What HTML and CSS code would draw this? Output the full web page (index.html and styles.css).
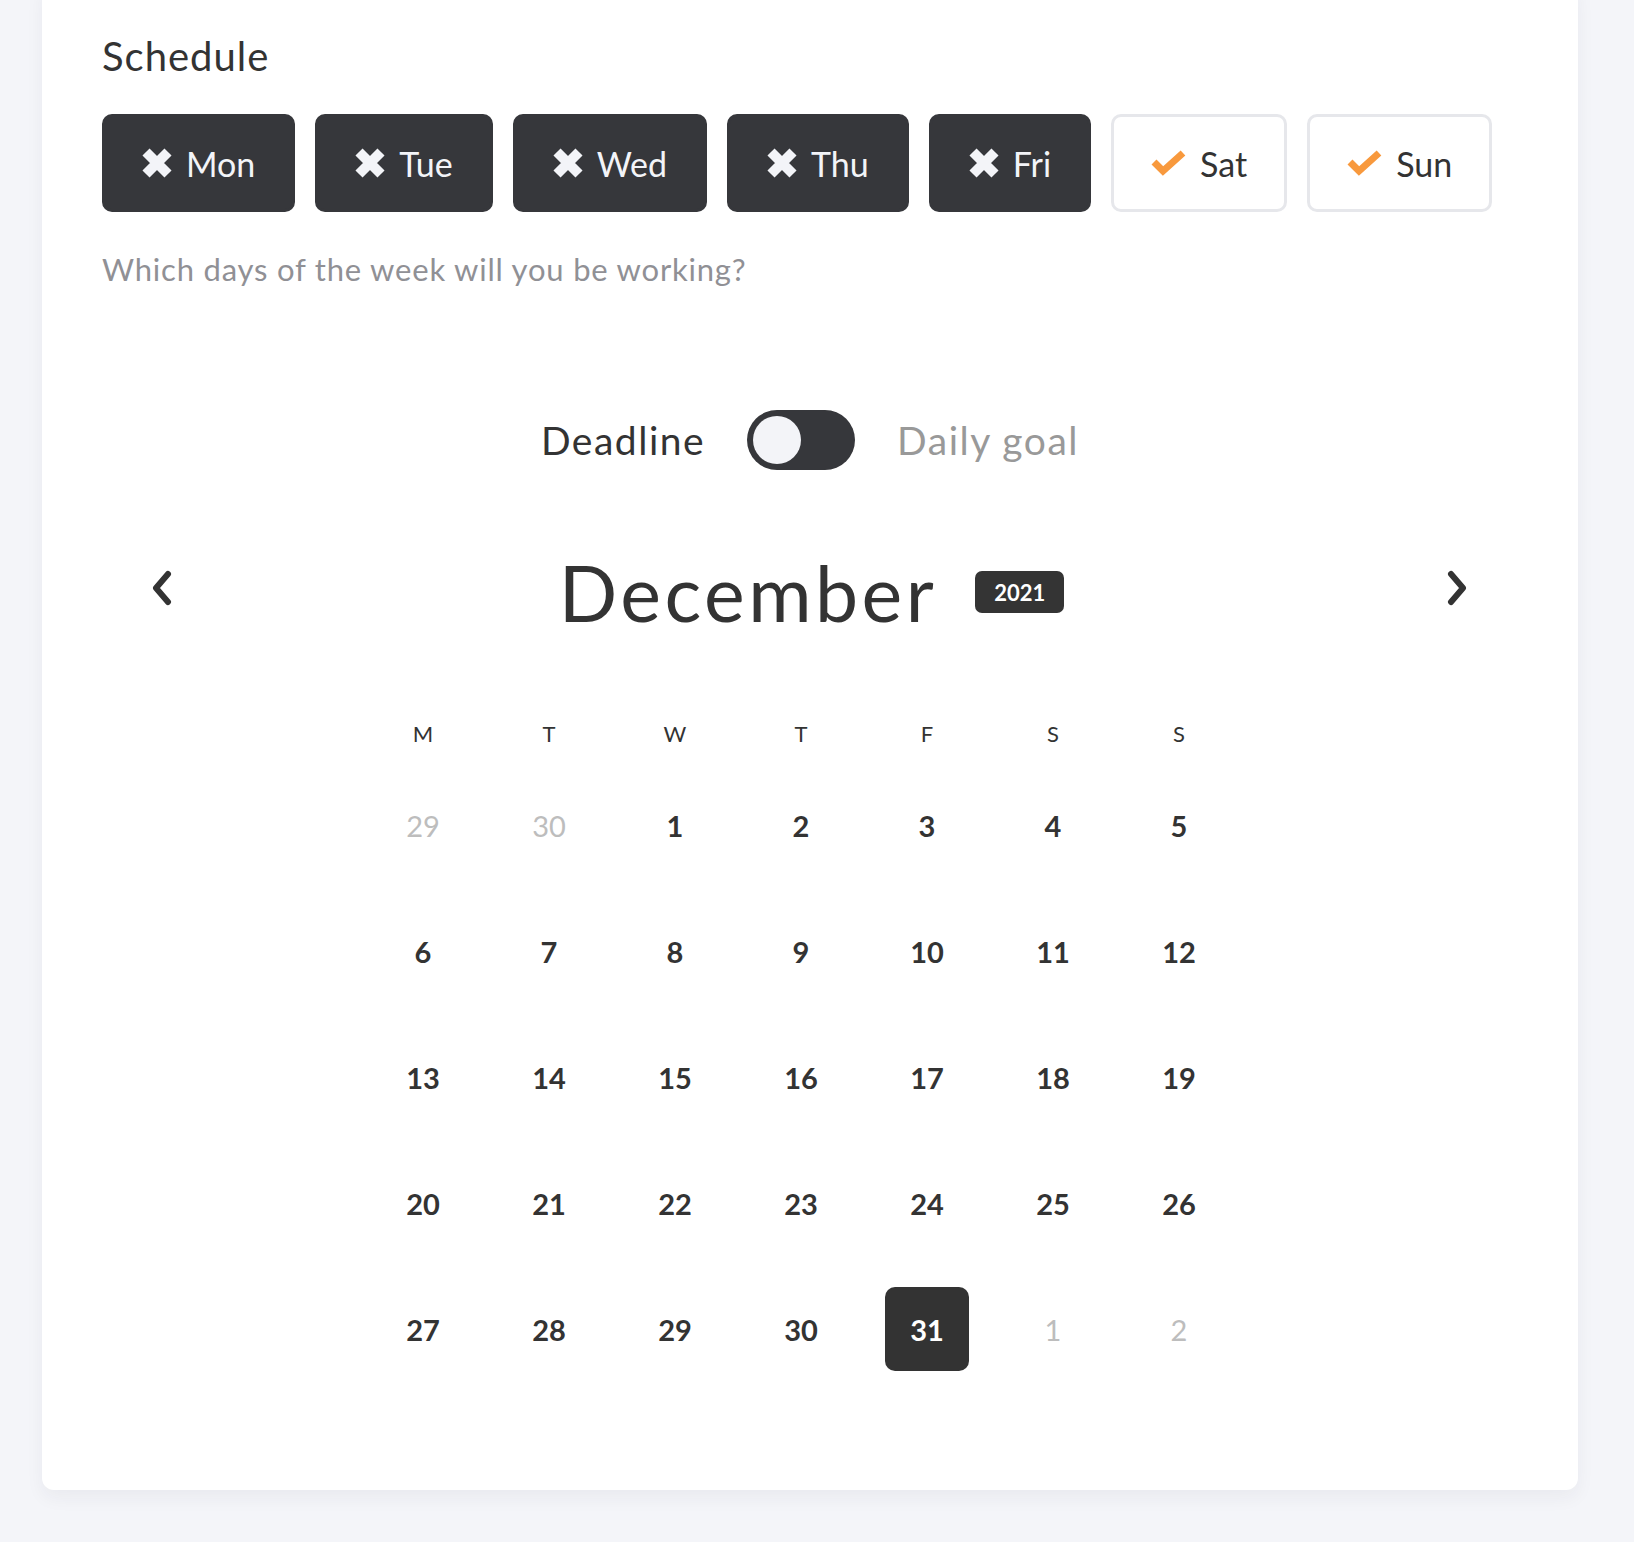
FILE: index.html
```html
<!DOCTYPE html>
<html lang="en">
<head>
<meta charset="utf-8">
<title>Schedule</title>
<link rel="stylesheet" href="styles.css">
</head>
<body>
<div class="page">
  <section class="card">
    <h2 class="label">Schedule</h2>
    <div class="days">
      <button class="day off"><svg class="ico-x" viewBox="0 0 30 30"><path d="M4 4L26 26M26 4L4 26"/></svg><span>Mon</span></button>
      <button class="day off"><svg class="ico-x" viewBox="0 0 30 30"><path d="M4 4L26 26M26 4L4 26"/></svg><span>Tue</span></button>
      <button class="day off"><svg class="ico-x" viewBox="0 0 30 30"><path d="M4 4L26 26M26 4L4 26"/></svg><span>Wed</span></button>
      <button class="day off"><svg class="ico-x" viewBox="0 0 30 30"><path d="M4 4L26 26M26 4L4 26"/></svg><span>Thu</span></button>
      <button class="day off"><svg class="ico-x" viewBox="0 0 30 30"><path d="M4 4L26 26M26 4L4 26"/></svg><span>Fri</span></button>
      <button class="day on"><svg class="ico-check" viewBox="0 0 35 26"><polyline points="3,12 12,21 32,3"/></svg><span>Sat</span></button>
      <button class="day on"><svg class="ico-check" viewBox="0 0 35 26"><polyline points="3,12 12,21 32,3"/></svg><span>Sun</span></button>
    </div>
    <p class="hint">Which days of the week will you be working?</p>

    <div class="mode">
      <span class="mode-label active">Deadline</span>
      <span class="switch"><span class="knob"></span></span>
      <span class="mode-label">Daily goal</span>
    </div>

    <div class="cal-head">
      <button class="nav" aria-label="Previous month"><svg viewBox="0 0 22 36"><polyline points="17,4 5,18 17,32"/></svg></button>
      <div class="month"><span class="month-name">December</span><span class="year">2021</span></div>
      <button class="nav" aria-label="Next month"><svg viewBox="0 0 22 36"><polyline points="5,4 17,18 5,32"/></svg></button>
    </div>

    <div class="cal">
      <div class="weekdays">
        <span>M</span><span>T</span><span>W</span><span>T</span><span>F</span><span>S</span><span>S</span>
      </div>
      <div class="dates">
        <span class="date muted">29</span><span class="date muted">30</span><span class="date">1</span><span class="date">2</span><span class="date">3</span><span class="date">4</span><span class="date">5</span>
        <span class="date">6</span><span class="date">7</span><span class="date">8</span><span class="date">9</span><span class="date">10</span><span class="date">11</span><span class="date">12</span>
        <span class="date">13</span><span class="date">14</span><span class="date">15</span><span class="date">16</span><span class="date">17</span><span class="date">18</span><span class="date">19</span>
        <span class="date">20</span><span class="date">21</span><span class="date">22</span><span class="date">23</span><span class="date">24</span><span class="date">25</span><span class="date">26</span>
        <span class="date">27</span><span class="date">28</span><span class="date">29</span><span class="date">30</span><span class="date selected">31</span><span class="date muted">1</span><span class="date muted">2</span>
      </div>
    </div>
  </section>
</div>
</body>
</html>
```

FILE: styles.css
```css
* { box-sizing: border-box; }

html, body {
  margin: 0;
  background: #f4f5f9;
}

body {
  font-family: "Lato", "Noto Sans", sans-serif;
  color: #333333;
}

.page {
  padding: 0 56px 52px 42px;
  overflow: hidden;
}

.card {
  margin-top: -20px;
  background: #ffffff;
  border-radius: 12px;
  box-shadow: 0 8px 18px rgba(30, 35, 60, 0.05);
  padding: 53px 60px 119px 60px;
}

.label {
  margin: 0;
  font-size: 40px;
  line-height: 46px;
  font-weight: 400;
  letter-spacing: 1px;
  color: #333333;
}

.days {
  margin-top: 35px;
  display: flex;
  gap: 20px;
}

.day {
  font: inherit;
  height: 98px;
  padding: 0 37px;
  border: 3px solid #36373b;
  border-radius: 10px;
  display: flex;
  align-items: center;
  gap: 14px;
  font-size: 34px;
  line-height: 40px;
  cursor: pointer;
}

.day span {
  padding-top: 2px;
}

.day.off {
  background: #36373b;
  color: #f3f4f8;
}

.day.on {
  background: #ffffff;
  border-color: #e6e7eb;
  color: #333333;
}

.ico-x {
  width: 30px;
  height: 30px;
  flex: none;
}

.ico-x path {
  stroke: #f3f4f8;
  stroke-width: 10;
  fill: none;
}

.ico-check {
  width: 35px;
  height: 26px;
  flex: none;
}

.ico-check polyline {
  stroke: #f8993d;
  stroke-width: 7;
  fill: none;
  stroke-linejoin: miter;
}

.hint {
  margin: 39px 0 0 0;
  font-size: 31px;
  line-height: 36px;
  letter-spacing: 0.8px;
  color: #909095;
}

.mode {
  margin-top: 123px;
  display: flex;
  justify-content: center;
  align-items: center;
  gap: 42px;
}

.mode-label {
  font-size: 39px;
  line-height: 46px;
  letter-spacing: 1.5px;
  color: #999999;
}

.mode-label.active {
  color: #333333;
}

.switch {
  width: 108px;
  height: 60px;
  padding: 6px;
  border-radius: 30px;
  background: #36373b;
  display: flex;
}

.knob {
  width: 48px;
  height: 48px;
  border-radius: 50%;
  background: #f3f4f8;
}

.cal-head {
  margin-top: 77px;
  height: 90px;
  padding: 0 50px 0 49px;
  display: flex;
  align-items: center;
  justify-content: space-between;
}

.nav {
  background: none;
  border: 0;
  padding: 0;
  width: 22px;
  height: 36px;
  margin-bottom: 8px;
  cursor: pointer;
}

.nav svg {
  display: block;
  width: 22px;
  height: 36px;
}

.nav polyline {
  fill: none;
  stroke: #333333;
  stroke-width: 6;
  stroke-linecap: round;
  stroke-linejoin: round;
}

.month {
  display: flex;
  align-items: center;
  gap: 38px;
  padding-left: 4px;
}

.month-name {
  font-size: 77px;
  line-height: 90px;
  font-weight: 400;
  letter-spacing: 3.5px;
  color: #333333;
}

.year {
  width: 89px;
  height: 42px;
  border-radius: 7px;
  background: #343434;
  color: #ffffff;
  font-size: 22px;
  font-weight: 700;
  display: flex;
  align-items: center;
  justify-content: center;
}

.cal {
  margin-left: 279px;
  width: 840px;
}

.weekdays,
.dates {
  display: grid;
  grid-template-columns: repeat(7, 84px);
  column-gap: 42px;
}

.weekdays {
  margin-top: 84px;
}

.weekdays span {
  text-align: center;
  font-size: 22px;
  line-height: 26px;
  color: #333333;
}

.dates {
  margin-top: 36px;
  row-gap: 42px;
}

.date {
  height: 84px;
  display: flex;
  align-items: center;
  justify-content: center;
  font-size: 29px;
  font-weight: 700;
  color: #333333;
  border-radius: 10px;
}

.date.muted {
  font-weight: 400;
  color: #bdbdbd;
}

.date.selected {
  background: #333333;
  color: #ffffff;
}
```
